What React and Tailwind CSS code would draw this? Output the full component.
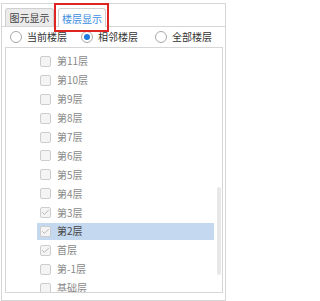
import { Check } from "lucide-react";

const floors = [
  { name: "第11层", checked: false },
  { name: "第10层", checked: false },
  { name: "第9层", checked: false },
  { name: "第8层", checked: false },
  { name: "第7层", checked: false },
  { name: "第6层", checked: false },
  { name: "第5层", checked: false },
  { name: "第4层", checked: false },
  { name: "第3层", checked: true },
  { name: "第2层", checked: true, active: true },
  { name: "首层", checked: true },
  { name: "第-1层", checked: false },
  { name: "基础层", checked: false },
];

function Radio({ label, selected }) {
  return (
    <div className="flex items-center gap-[5px]">
      <span className="w-[12px] h-[12px] rounded-full border border-[#a8a8a8] bg-white flex items-center justify-center">
        {selected && <span className="w-[6px] h-[6px] rounded-full bg-[#1c7be0]" />}
      </span>
      <span className="text-[10px] leading-none text-[#333]">{label}</span>
    </div>
  );
}

function App() {
  return (
    <div className="w-[227px] h-[301px] bg-white relative font-['Noto_Sans_CJK_SC','Noto_Sans',sans-serif] overflow-hidden">
      <div className="mt-[3px] ml-[1px] w-[225px] h-[298px] border border-[#d6d6d6] flex flex-col">

        <div className="h-[23px] pt-[4px] pl-[3px] flex items-end gap-[4px] border-b border-[#d6d6d6]">
          <div className="w-[49px] h-[18px] bg-[#ebebeb] border border-b-0 border-[#d0d0d0] rounded-t-[3px] flex items-center justify-center text-[10px] text-[#444]">
            图元显示
          </div>
          <div className="w-[48px] h-[19px] -mb-px bg-white border border-b-0 border-[#d0d0d0] rounded-t-[3px] flex items-center justify-center text-[10px] text-[#3e8ddf]">
            楼层显示
          </div>
        </div>

        <div className="h-[20px] pl-[8px] flex items-center">
          <div className="w-[71px]">
            <Radio label="当前楼层" />
          </div>
          <div className="w-[74px]">
            <Radio label="相邻楼层" selected />
          </div>
          <Radio label="全部楼层" />
        </div>

        <div className="ml-[3px] w-[218px] h-[246px] border border-[#d6d6d6] flex pl-[31px] overflow-hidden">
          <div className="w-[177px] pt-[4px] flex flex-col">
            {floors.map((floor) => (
              <div key={floor.name} className="h-[18.9px] shrink-0 flex items-center">
                <div
                  className={
                    floor.active
                      ? "w-full h-[17px] bg-[#c4d9ef] flex items-center gap-[6px] pl-[3px]"
                      : "w-full h-[17px] flex items-center gap-[6px] pl-[3px]"
                  }
                >
                  <span className="w-[11px] h-[11px] rounded-[2px] border border-[#cdcdcd] bg-[#f4f4f4] flex items-center justify-center">
                    {floor.checked && <Check size={9} strokeWidth={2} className="text-[#a0a0a0]" />}
                  </span>
                  <span className={floor.active ? "text-[10px] leading-none text-[#444]" : "text-[10px] leading-none text-[#888]"}>
                    {floor.name}
                  </span>
                </div>
              </div>
            ))}
          </div>
          <div className="ml-[3px] mt-[139px] w-[4px] h-[88px] rounded-full bg-[#e8e8e8]" />
        </div>
      </div>

      {/* red highlight around the active tab */}
      <div className="absolute left-[54px] top-[3px] w-[55px] h-[29px] border-2 border-[#e02424]" />
    </div>
  );
}

export default App;
